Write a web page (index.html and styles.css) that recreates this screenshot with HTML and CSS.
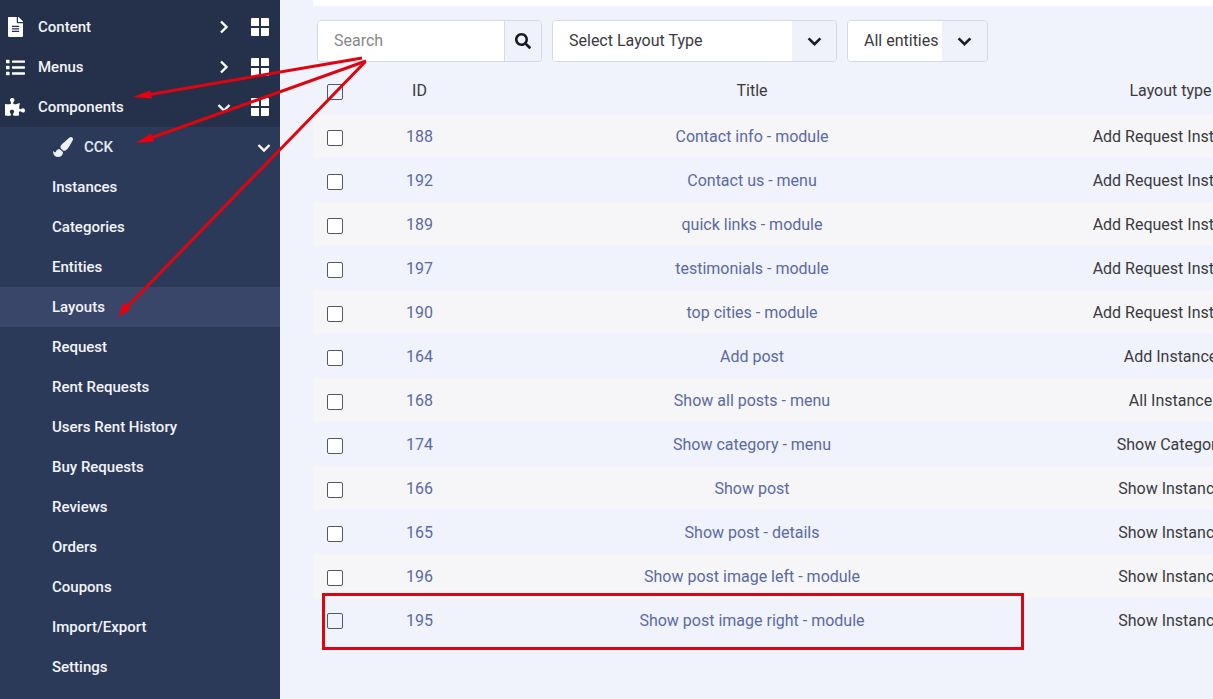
FILE: index.html
```html
<!DOCTYPE html>
<html lang="en">
<head>
<meta charset="utf-8">
<title>Layouts</title>
<link rel="stylesheet" href="styles.css">
</head>
<body>
<svg class="defs" width="0" height="0" aria-hidden="true">
  <symbol id="i-file" viewBox="0 0 384 512"><path d="M224 136V0H24C10.7 0 0 10.7 0 24v464c0 13.3 10.7 24 24 24h336c13.3 0 24-10.7 24-24V160H248c-13.2 0-24-10.8-24-24zm64 236c0 6.6-5.4 12-12 12H108c-6.6 0-12-5.4-12-12v-8c0-6.6 5.4-12 12-12h168c6.6 0 12 5.4 12 12v8zm0-64c0 6.6-5.4 12-12 12H108c-6.6 0-12-5.4-12-12v-8c0-6.6 5.4-12 12-12h168c6.6 0 12 5.4 12 12v8zm0-72v8c0 6.6-5.4 12-12 12H108c-6.6 0-12-5.4-12-12v-8c0-6.6 5.4-12 12-12h168c6.6 0 12 5.4 12 12zm96-114.1v6.1H256V0h6.1c6.4 0 12.5 2.5 17 7l97.9 98c4.5 4.5 7 10.6 7 16.9z"/></symbol>
  <symbol id="i-list" viewBox="0 0 512 512"><path d="M80 368H16a16 16 0 0 0-16 16v64a16 16 0 0 0 16 16h64a16 16 0 0 0 16-16v-64a16 16 0 0 0-16-16zm0-320H16A16 16 0 0 0 0 64v64a16 16 0 0 0 16 16h64a16 16 0 0 0 16-16V64a16 16 0 0 0-16-16zm0 160H16a16 16 0 0 0-16 16v64a16 16 0 0 0 16 16h64a16 16 0 0 0 16-16v-64a16 16 0 0 0-16-16zm416 176H176a16 16 0 0 0-16 16v32a16 16 0 0 0 16 16h320a16 16 0 0 0 16-16v-32a16 16 0 0 0-16-16zm0-320H176a16 16 0 0 0-16 16v32a16 16 0 0 0 16 16h320a16 16 0 0 0 16-16V80a16 16 0 0 0-16-16zm0 160H176a16 16 0 0 0-16 16v32a16 16 0 0 0 16 16h320a16 16 0 0 0 16-16v-32a16 16 0 0 0-16-16z"/></symbol>
  <symbol id="i-puzzle" viewBox="0 0 576 512"><path d="M519.442 288.651c-41.519 0-59.5 31.593-82.058 31.593C377.409 320.244 432 144 432 144s-196.288 80-196.288-3.297c0-35.827 36.288-46.25 36.288-85.985C272 19.216 243.885 0 210.539 0c-34.654 0-66.366 18.891-66.366 56.346 0 41.364 31.711 59.277 31.711 81.75C175.885 207.719 0 166.758 0 166.758v333.237s178.635 41.047 178.635-28.662c0-22.473-40-40.107-40-81.471 0-37.456 29.25-56.346 63.577-56.346 33.673 0 61.788 19.216 61.788 54.717 0 39.735-36.288 50.158-36.288 85.985 0 60.803 129.675 25.73 181.23 25.73 0 0-34.725-120.101 25.827-120.101 35.962 0 46.423 36.152 86.308 36.152C556.712 416 576 387.99 576 354.443c0-34.199-18.962-65.792-56.558-65.792z"/></symbol>
  <symbol id="i-brush" viewBox="0 0 512 512"><path d="M167.02 309.34c-40.12 2.58-76.53 17.86-97.19 72.3-2.35 6.21-8 9.98-14.59 9.98-11.11 0-45.46-27.67-55.25-34.35C0 439.62 37.93 512 128 512c75.86 0 128-43.77 128-120.19 0-3.11-.65-6.08-.97-9.13l-88.01-73.34zM457.89 0c-15.16 0-29.37 6.71-40.21 16.45C213.27 199.05 192 203.34 192 257.09c0 13.7 3.25 26.76 8.73 38.7l63.82 53.18c7.21 1.8 14.64 3.03 22.39 3.03 62.11 0 98.11-45.47 211.16-256.46 7.38-14.35 13.9-29.85 13.9-45.99C512 20.64 486 0 457.89 0z"/></symbol>
  <symbol id="i-search" viewBox="0 0 512 512"><path d="M505 442.7L405.3 343c-4.5-4.5-10.6-7-17-7H372c27.6-35.3 44-79.7 44-128C416 93.1 322.9 0 208 0S0 93.1 0 208s93.1 208 208 208c48.3 0 92.7-16.4 128-44v16.3c0 6.4 2.5 12.5 7 17l99.7 99.7c9.4 9.4 24.6 9.4 33.9 0l28.3-28.3c9.4-9.4 9.4-24.6.1-34zM208 336c-70.7 0-128-57.2-128-128 0-70.7 57.2-128 128-128 70.7 0 128 57.2 128 128 0 70.7-57.2 128-128 128z"/></symbol>
  <symbol id="i-grid" viewBox="0 0 18 18"><path d="M0 1a1 1 0 0 1 1-1h7v8H0zM10 0h7a1 1 0 0 1 1 1v7h-8zM0 10h8v8H1a1 1 0 0 1-1-1zM10 10h8v7a1 1 0 0 1-1 1h-7z"/></symbol>
  <symbol id="i-right" viewBox="0 0 10 14"><path d="M2 1.500 7.500 7 2 12.500" fill="none" stroke="currentColor" stroke-width="2.4"/></symbol>
  <symbol id="i-down" viewBox="0 0 14 10"><path d="M1.500 2 7 7.500 12.500 2" fill="none" stroke="currentColor" stroke-width="2.4"/></symbol>
</svg>

<div class="page">
  <nav class="sidebar">
    <div class="top-group">
      <a class="item top"><svg class="ic ic-file"><use href="#i-file"/></svg><span class="label">Content</span><svg class="chev-r"><use href="#i-right"/></svg><svg class="grid-ic"><use href="#i-grid"/></svg></a>
      <a class="item top"><svg class="ic ic-list"><use href="#i-list"/></svg><span class="label">Menus</span><svg class="chev-r"><use href="#i-right"/></svg><svg class="grid-ic"><use href="#i-grid"/></svg></a>
      <a class="item top"><svg class="ic ic-puzzle"><use href="#i-puzzle"/></svg><span class="label">Components</span><svg class="chev-d"><use href="#i-down"/></svg><svg class="grid-ic"><use href="#i-grid"/></svg></a>
    </div>
    <div class="sub-group">
      <a class="item cck"><svg class="ic-brush"><use href="#i-brush"/></svg><span class="label">CCK</span><svg class="chev-sub"><use href="#i-down"/></svg></a>
      <a class="item sub">Instances</a>
      <a class="item sub">Categories</a>
      <a class="item sub">Entities</a>
      <a class="item sub active">Layouts</a>
      <a class="item sub">Request</a>
      <a class="item sub">Rent Requests</a>
      <a class="item sub">Users Rent History</a>
      <a class="item sub">Buy Requests</a>
      <a class="item sub">Reviews</a>
      <a class="item sub">Orders</a>
      <a class="item sub">Coupons</a>
      <a class="item sub">Import/Export</a>
      <a class="item sub">Settings</a>
    </div>
  </nav>

  <main class="main">
    <div class="strip"></div>
    <div class="toolbar">
      <div class="search">
        <span class="search-input">Search</span>
        <span class="search-btn"><svg class="search-ic"><use href="#i-search"/></svg></span>
      </div>
      <div class="select select-type">
        <span class="select-text">Select Layout Type</span>
        <span class="select-arrow"><svg class="chev-dark"><use href="#i-down"/></svg></span>
      </div>
      <div class="select select-entity">
        <span class="select-text">All entities</span>
        <span class="select-arrow"><svg class="chev-dark"><use href="#i-down"/></svg></span>
      </div>
    </div>

    <div class="table">
      <div class="row head"><span class="c-check"><i class="cb cb-clear"></i></span><span>ID</span><span>Title</span><span>Layout type</span></div>
      <div class="row"><span class="c-check"><i class="cb"></i></span><a>188</a><a>Contact info - module</a><span>Add Request Instance</span></div>
      <div class="row"><span class="c-check"><i class="cb"></i></span><a>192</a><a>Contact us - menu</a><span>Add Request Instance</span></div>
      <div class="row"><span class="c-check"><i class="cb"></i></span><a>189</a><a>quick links - module</a><span>Add Request Instance</span></div>
      <div class="row"><span class="c-check"><i class="cb"></i></span><a>197</a><a>testimonials - module</a><span>Add Request Instance</span></div>
      <div class="row"><span class="c-check"><i class="cb"></i></span><a>190</a><a>top cities - module</a><span>Add Request Instance</span></div>
      <div class="row"><span class="c-check"><i class="cb"></i></span><a>164</a><a>Add post</a><span>Add Instance</span></div>
      <div class="row"><span class="c-check"><i class="cb"></i></span><a>168</a><a>Show all posts - menu</a><span>All Instance</span></div>
      <div class="row"><span class="c-check"><i class="cb"></i></span><a>174</a><a>Show category - menu</a><span>Show Category</span></div>
      <div class="row"><span class="c-check"><i class="cb"></i></span><a>166</a><a>Show post</a><span>Show Instance</span></div>
      <div class="row"><span class="c-check"><i class="cb"></i></span><a>165</a><a>Show post - details</a><span>Show Instance</span></div>
      <div class="row"><span class="c-check"><i class="cb"></i></span><a>196</a><a>Show post image left - module</a><span>Show Instance</span></div>
      <div class="row last"><span class="c-check"><i class="cb cb-clear"></i></span><a>195</a><a>Show post image right - module</a><span>Show Instance</span></div>
    </div>
  </main>

  <div class="red-box"></div>
  <svg class="arrows" viewBox="0 0 1213 699" aria-hidden="true">
    <g class="arrow-lines">
      <path d="M362 58 150 94.500"/>
      <path d="M366 61 152 137.500"/>
      <path d="M365 62 128 306"/>
    </g>
    <g class="arrow-heads">
      <path d="M133 97 150 90.500 152 98.500z"/>
      <path d="M136 143 151 133.500 154 141.500z"/>
      <path d="M118 317 124 302 131 309z"/>
    </g>
  </svg>
</div>
</body>
</html>
```

FILE: styles.css
```css
* { box-sizing: border-box; }

html, body {
  margin: 0;
  height: 100%;
  overflow: hidden;
}

body {
  font-family: Roboto, "Liberation Sans", sans-serif;
  font-size: 16px;
  color: #333;
  background: #f0f3fb;
}

.defs { display: block; height: 0; }

.page {
  position: relative;
  display: flex;
  width: 1213px;
  height: 699px;
  overflow: hidden;
}

/* Sidebar */
.sidebar {
  flex: 0 0 280px;
  display: flex;
  flex-direction: column;
  background: #2c3a5a;
  color: #f2f4f8;
  font-size: 15px;
  font-weight: 500;
}

.top-group {
  padding-top: 7px;
  background: #25304a;
}

.item {
  display: flex;
  align-items: center;
  height: 40px;
}

.top { padding-left: 7px; }

.ic { flex: none; fill: #fff; }
.ic-file { width: 15px; height: 20px; margin-left: 1px; margin-right: 15px; }
.ic-list { width: 19px; height: 19px; margin-left: -1px; margin-right: 13px; }
.ic-puzzle { width: 20px; height: 18px; margin-left: -2px; margin-right: 13px; }

.label { flex: 1; }

.chev-r { flex: none; width: 10px; height: 14px; color: #fff; margin-right: 22px; }
.chev-d { flex: none; width: 14px; height: 10px; color: #fff; margin-right: 20px; margin-top: 2px; }

.grid-ic { flex: none; width: 18px; height: 18px; fill: #fff; margin-right: 11px; }

.cck { padding-left: 53px; padding-bottom: 1px; color: #e6e9f0; }
.ic-brush { flex: none; width: 20px; height: 20px; fill: #eef0f5; margin-right: 11px; }
.chev-sub { flex: none; width: 14px; height: 10px; color: #fff; margin-right: 9px; margin-top: 2px; }

.sub { padding-left: 52px; }

.active { background: #394669; }

/* Main */
.main {
  flex: 1;
  min-width: 0;
  padding-left: 33px;
}

.strip {
  height: 6px;
  background: #fff;
}

.toolbar {
  display: flex;
  gap: 10px;
  margin: 14px 0 8px 4px;
  height: 42px;
}

.search, .select {
  display: flex;
  height: 42px;
  border: 1px solid #d5d9e4;
  border-radius: 4px;
  overflow: hidden;
}

.search { width: 225px; }

.search-input {
  flex: 1;
  padding-left: 16px;
  line-height: 40px;
  background: #fff;
  color: #888;
}

.search-btn {
  flex: 0 0 37px;
  display: flex;
  align-items: center;
  justify-content: center;
  border-left: 1px solid #d5d9e4;
  background: #eff2fa;
}

.search-ic { width: 16px; height: 16px; fill: #15192a; }

.select-type { width: 285px; }
.select-entity { width: 141px; }

.select-text {
  flex: 1;
  padding-left: 16px;
  line-height: 40px;
  background: #fff;
  color: #3a3a40;
}

.select-arrow {
  display: flex;
  align-items: center;
  justify-content: center;
  background: #eff2fa;
}

.select-type .select-arrow { flex: 0 0 44px; }
.select-entity .select-arrow { flex: 0 0 45px; }

.chev-dark { width: 15px; height: 11px; color: #1a1d2b; }

/* Table */
.table {
  width: 1008px;
}

.row {
  display: grid;
  grid-template-columns: 44px 125px 540px 297px;
  align-items: center;
  height: 44px;
  text-align: center;
  color: #3a3a40;
}

.row:nth-child(even) { background: #f6f6f8; }

.row a { color: #5a6aa3; }

.head { color: #3a3a40; padding-bottom: 4px; }

.c-check { display: flex; justify-content: center; padding-top: 4px; }
.last .c-check { padding-top: 2px; }

.cb {
  display: block;
  width: 16px;
  height: 16px;
  border: 1px solid #55585f;
  border-radius: 2px;
  background: #fff;
}

.cb-clear { background: #f0f3fb; }

/* Annotations */
.red-box {
  position: absolute;
  left: 322px;
  top: 593px;
  width: 702px;
  height: 57px;
  border: 3px solid #d90613;
}

.arrows {
  position: absolute;
  left: 0;
  top: 0;
  width: 1213px;
  height: 699px;
  pointer-events: none;
}

.arrow-lines path { fill: none; stroke: #de0510; stroke-width: 3; }
.arrow-heads path { fill: #e8000f; }
```
